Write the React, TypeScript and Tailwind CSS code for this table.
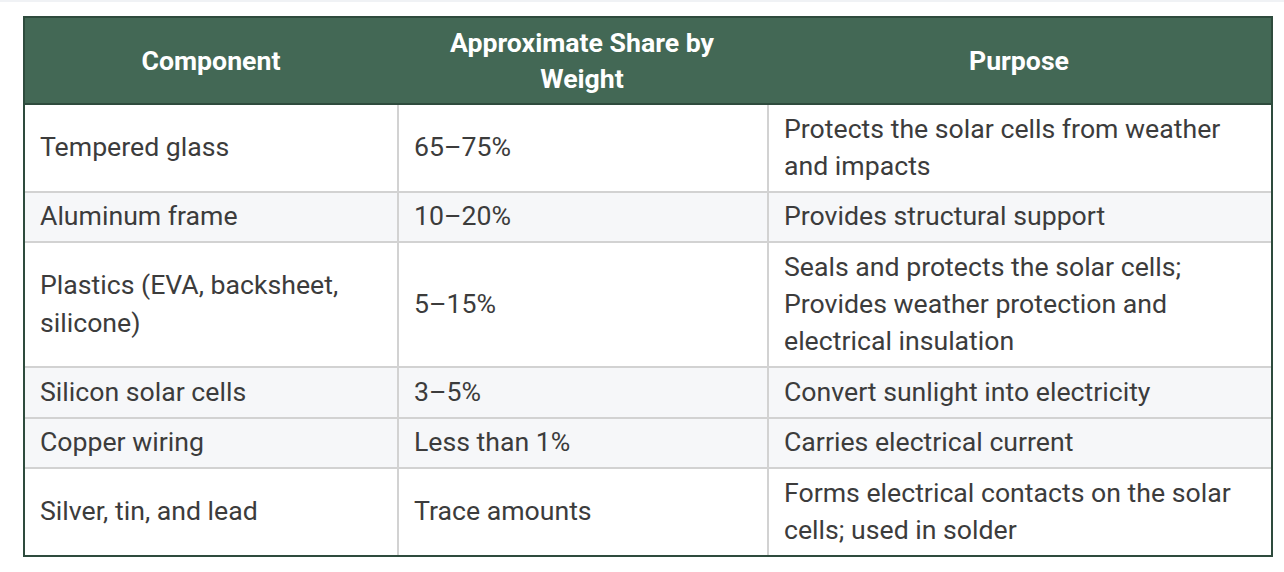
import React from "react";

const rows: { c: string; w: string; p: string; gray: boolean }[] = [
  { c: "Tempered glass", w: "65–75%", p: "Protects the solar cells from weather and impacts", gray: false },
  { c: "Aluminum frame", w: "10–20%", p: "Provides structural support", gray: true },
  {
    c: "Plastics (EVA, backsheet, silicone)",
    w: "5–15%",
    p: "Seals and protects the solar cells; Provides weather protection and electrical insulation",
    gray: false,
  },
  { c: "Silicon solar cells", w: "3–5%", p: "Convert sunlight into electricity", gray: true },
  { c: "Copper wiring", w: "Less than 1%", p: "Carries electrical current", gray: true },
  { c: "Silver, tin, and lead", w: "Trace amounts", p: "Forms electrical contacts on the solar cells; used in solder", gray: false },
];

export default function App() {
  return (
    <div className="w-[1284px] h-[572px] bg-white font-['Roboto',sans-serif] overflow-hidden">
      <div className="h-[2px] bg-[#f0f2f5]" />
      <div className="pl-[23px] pt-[14px]">
        <table className="table-fixed w-[1250px] border-separate border-spacing-0 border-2 border-[#2e4b3d] text-[26.67px] leading-[37.25px] text-[#3c3c3c]">
          <colgroup>
            <col className="w-[372px]" />
            <col className="w-[370px]" />
            <col className="w-[504px]" />
          </colgroup>
          <thead>
            <tr className="bg-[#436855] text-white">
              <th className="border-b-2 border-[#2e4b3d] px-4 py-[6px] h-[87px] font-bold leading-[36px] text-center align-middle">
                Component
              </th>
              <th className="border-b-2 border-[#2e4b3d] px-4 py-[6px] font-bold leading-[36px] text-center align-middle">
                Approximate Share by Weight
              </th>
              <th className="border-b-2 border-[#2e4b3d] px-4 py-[6px] font-bold leading-[36px] text-center align-middle">
                Purpose
              </th>
            </tr>
          </thead>
          <tbody>
            {rows.map((r, i) => (
              <tr key={i} className={r.gray ? "bg-[#f6f7f9]" : "bg-white"}>
                <td
                  className={
                    i === 0
                      ? "pl-[15px] pr-4 py-[5.6px] align-middle"
                      : "pl-[15px] pr-4 py-[5.6px] align-middle border-t-2 border-[#d2d2d2]"
                  }
                >
                  {r.c}
                </td>
                <td
                  className={
                    i === 0
                      ? "pl-[15px] pr-4 py-[5.6px] align-middle border-l-2 border-[#d2d2d2]"
                      : "pl-[15px] pr-4 py-[5.6px] align-middle border-l-2 border-t-2 border-[#d2d2d2]"
                  }
                >
                  {r.w}
                </td>
                <td
                  className={
                    i === 0
                      ? "pl-[15px] pr-4 py-[5.6px] align-middle border-l-2 border-[#d2d2d2]"
                      : "pl-[15px] pr-4 py-[5.6px] align-middle border-l-2 border-t-2 border-[#d2d2d2]"
                  }
                >
                  {r.p}
                </td>
              </tr>
            ))}
          </tbody>
        </table>
      </div>
    </div>
  );
}
